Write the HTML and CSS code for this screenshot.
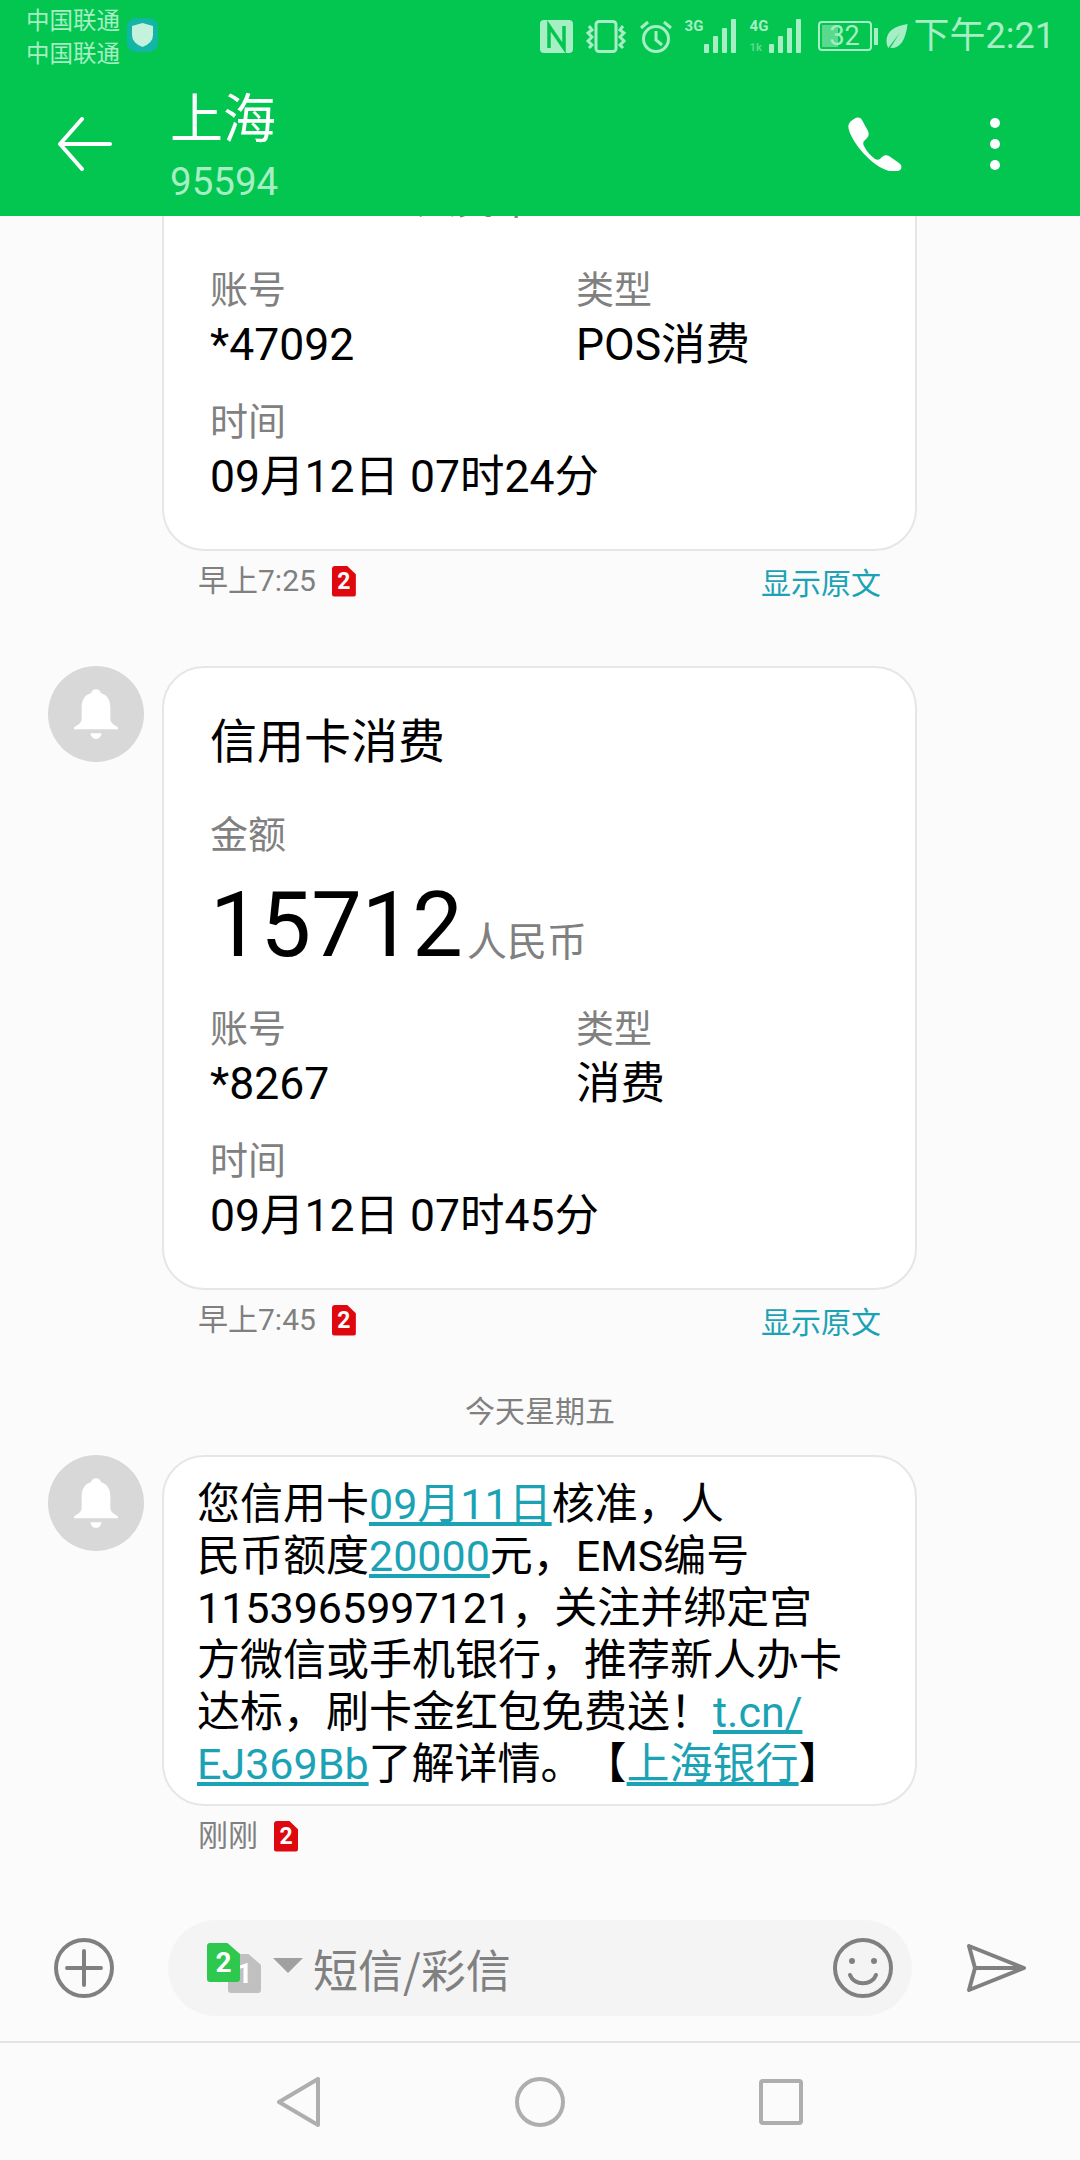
FILE: index.html
```html
<!DOCTYPE html>
<html lang="zh">
<head>
  <meta charset="UTF-8">
  <meta name="viewport" content="width=device-width, initial-scale=1">
  <title>95594</title>
  <link rel="stylesheet" href="styles.css">
</head>
<body>
  <div class="phone">
    <!-- Top green area -->
    <header class="topbar">
      <div class="status">
        <div class="carriers">
          <span>中国联通</span>
          <span>中国联通</span>
        </div>
        <svg class="shield" width="31" height="34" viewBox="0 0 31 34">
          <rect x="0" y="0" width="31" height="34" rx="9" fill="#13b5a5"/>
          <path d="M15.500 5 l10.500 3 v9 q0 8 -10.500 12 q-10.500 -4 -10.500 -12 v-9z" fill="#c4f2dc"/>
        </svg>
        <div class="status-right">
          <svg width="33" height="33" viewBox="0 0 33 33"><rect width="33" height="33" rx="4" fill="#a6eec4"/><path d="M9 28V6l15 22V6" fill="none" stroke="#03c651" stroke-width="3.500"/></svg>
          <svg width="42" height="33" viewBox="0 0 42 33" fill="none" stroke="#a6eec4" stroke-width="3"><rect x="11" y="1.500" width="20" height="30" rx="3"/><path d="M4 6l3 4-4 3 4 4-4 4 4 4-3 3M38 6l-3 4 4 3-4 4 4 4-4 4 3 3"/></svg>
          <svg width="34" height="33" viewBox="0 0 34 33" fill="none" stroke="#a6eec4" stroke-width="3"><circle cx="17" cy="19" r="12.500"/><path d="M17 11v9l6 5M2 8l7-6M32 8l-7-6"/></svg>
          <div class="signal">
            <div class="net"><span>3G</span></div>
            <svg width="34" height="34" viewBox="0 0 34 34" fill="#a6eec4"><rect x="0" y="25" width="5" height="9" rx="1"/><rect x="9" y="17" width="5" height="17" rx="1"/><rect x="18" y="9" width="5" height="25" rx="1"/><rect x="27" y="0" width="5" height="34" rx="1"/></svg>
          </div>
          <div class="signal">
            <div class="net"><span>4G</span><span class="net-sub">1k</span></div>
            <svg width="34" height="34" viewBox="0 0 34 34" fill="#a6eec4"><rect x="0" y="25" width="5" height="9" rx="1"/><rect x="9" y="17" width="5" height="17" rx="1"/><rect x="18" y="9" width="5" height="25" rx="1"/><rect x="27" y="0" width="5" height="34" rx="1"/></svg>
          </div>
          <div class="battery"><span class="battery-fill"></span><span class="battery-num">32</span></div>
          <span class="battery-tip"></span>
          <svg class="leaf" width="22" height="25" viewBox="0 0 22 26"><path d="M22 0C8 2 0 8 0 18q0 4 2 7L14 9 4 25c10 1 16-8 18-25z" fill="#a6eec4"/></svg>
          <span class="clock">下午2:21</span>
        </div>
      </div>
      <div class="appbar">
        <svg width="54" height="54" viewBox="0 0 54 54" fill="none" stroke="#fff" stroke-width="4" stroke-linecap="round" stroke-linejoin="round"><path d="M52 27H2M24 2L2 27l22 25"/></svg>
        <div class="contact">
          <div class="contact-name">上海</div>
          <div class="contact-num">95594</div>
        </div>
        <svg class="phone-icon" width="54" height="54" viewBox="0 0 54 54"><path d="M6 2c3-2 6-2 8 1l6 11c1 3 1 5-1 7l-3 3c-1 1-1 3 0 5 3 6 7 10 11 13 2 1 3 1 5 0l2-2c2-2 5-2 7-1l10 7c3 2 3 5 1 7-3 2-7 2-11 1C23 49 4 25 1 13-1 8 2 4 6 2z" fill="#fff"/></svg>
        <div class="dots"><i></i><i></i><i></i></div>
      </div>
    </header>

    <!-- Messages -->
    <main class="messages">
      <div class="msg first">
        <div class="avatar-space"></div>
        <div class="msg-body">
          <div class="bubble card">
            <div class="amount first-amount"><span class="amount-num">3176</span><span class="amount-unit">人民币</span></div>
            <div class="fields">
              <div class="field"><div class="label">账号</div><div class="value">*47092</div></div>
              <div class="field"><div class="label">类型</div><div class="value">POS消费</div></div>
            </div>
            <div class="field time"><div class="label">时间</div><div class="value">09月12日 07时24分</div></div>
          </div>
          <div class="meta">
            <span class="stamp">早上7:25</span>
            <span class="sim">2</span>
            <span class="raw">显示原文</span>
          </div>
        </div>
      </div>

      <div class="msg">
        <div class="avatar">
          <svg width="44" height="52" viewBox="0 0 46 52" fill="#fff"><path d="M23 0c3 0 5 2 5 4 7 2 10 8 10 15v12c0 4 3 6 8 9v2H0v-2c5-3 8-5 8-9V19C8 12 11 6 18 4c0-2 2-4 5-4z"/><path d="M17 46h12c-1 4-3 6-6 6s-5-2-6-6z"/></svg>
        </div>
        <div class="msg-body">
          <div class="bubble card">
            <div class="card-title">信用卡消费</div>
            <div class="label amount-label">金额</div>
            <div class="amount"><span class="amount-num">15712</span><span class="amount-unit">人民币</span></div>
            <div class="fields">
              <div class="field"><div class="label">账号</div><div class="value">*8267</div></div>
              <div class="field"><div class="label">类型</div><div class="value">消费</div></div>
            </div>
            <div class="field time"><div class="label">时间</div><div class="value">09月12日 07时45分</div></div>
          </div>
          <div class="meta">
            <span class="stamp">早上7:45</span>
            <span class="sim">2</span>
            <span class="raw">显示原文</span>
          </div>
        </div>
      </div>

      <div class="date-sep">今天星期五</div>

      <div class="msg">
        <div class="avatar">
          <svg width="44" height="52" viewBox="0 0 46 52" fill="#fff"><path d="M23 0c3 0 5 2 5 4 7 2 10 8 10 15v12c0 4 3 6 8 9v2H0v-2c5-3 8-5 8-9V19C8 12 11 6 18 4c0-2 2-4 5-4z"/><path d="M17 46h12c-1 4-3 6-6 6s-5-2-6-6z"/></svg>
        </div>
        <div class="msg-body">
          <div class="bubble text">
            <div>您信用卡<a>09月11日</a>核准，人</div>
            <div>民币额度<a>20000</a>元，EMS编号</div>
            <div>1153965997121，关注并绑定宫</div>
            <div>方微信或手机银行，推荐新人办卡</div>
            <div>达标，刷卡金红包免费送！<a>t.cn/</a></div>
            <div><a>EJ369Bb</a>了解详情。【<a>上海银行</a>】</div>
          </div>
          <div class="meta">
            <span class="stamp">刚刚</span>
            <span class="sim">2</span>
          </div>
        </div>
      </div>
    </main>

    <!-- Input row -->
    <div class="composer">
      <svg width="60" height="60" viewBox="0 0 60 60" fill="none" stroke="#808080" stroke-width="4" stroke-linecap="round"><circle cx="30" cy="30" r="28"/><path d="M30 13v34M13 30h34"/></svg>
      <div class="input">
        <div class="sim-pick">
          <span class="sim-one">1</span>
          <span class="sim-two">2</span>
        </div>
        <span class="caret"></span>
        <span class="placeholder">短信/彩信</span>
        <svg class="smile" width="60" height="60" viewBox="0 0 60 60" fill="none" stroke="#808080" stroke-width="4" stroke-linecap="round"><circle cx="30" cy="30" r="28"/><circle cx="19" cy="23" r="3" fill="#808080" stroke="none"/><circle cx="41" cy="23" r="3" fill="#808080" stroke="none"/><path d="M17 37c4 11 22 11 26 0"/></svg>
      </div>
      <svg width="60" height="48" viewBox="0 0 60 48" fill="none" stroke="#808080" stroke-width="4" stroke-linejoin="round"><path d="M3 2l55 22L3 46l6-22zM9 24h49"/></svg>
    </div>

    <!-- Navigation bar -->
    <nav class="navbar">
      <svg width="44" height="50" viewBox="0 0 44 50" fill="none" stroke="#aeaeae" stroke-width="4" stroke-linejoin="round"><path d="M41 2v46L2 25z"/></svg>
      <svg width="50" height="50" viewBox="0 0 50 50" fill="none" stroke="#aeaeae" stroke-width="4"><circle cx="25" cy="25" r="23"/></svg>
      <svg width="44" height="46" viewBox="0 0 44 46" fill="none" stroke="#aeaeae" stroke-width="4"><rect x="2" y="2" width="40" height="42" rx="2"/></svg>
    </nav>
  </div>
</body>
</html>
```

FILE: styles.css
```css
/* General */
body {
  margin: 0;
  background: #fbfbfb;
  font-family: "Noto Sans CJK SC", "Roboto", sans-serif;
}
.phone {
  width: 1080px;
  height: 2160px;
  display: flex;
  flex-direction: column;
  overflow: hidden;
}
/* Top green area */
.topbar {
  height: 216px;
  flex-shrink: 0;
  background: #03c651;
}
.status {
  height: 72px;
  display: flex;
  align-items: center;
  padding: 0 25px 0 26px;
  box-sizing: border-box;
}
.carriers {
  display: flex;
  flex-direction: column;
  font-size: 23.500px;
  line-height: 33px;
  color: #a6eec4;
}
.shield {
  margin-left: 7px;
  margin-bottom: 2px;
}
.status-right {
  margin-left: auto;
  display: flex;
  align-items: center;
  gap: 12px;
}
.signal {
  display: flex;
  height: 34px;
}
.net {
  width: 19px;
  display: flex;
  flex-direction: column;
  justify-content: space-between;
  font: bold 15px/15px "Roboto", sans-serif;
  color: #a6eec4;
}
.net-sub {
  font-size: 11px;
  line-height: 11px;
  color: #5ad98c;
}
.battery {
  width: 54px;
  height: 30px;
  box-sizing: border-box;
  border: 2px solid #a6eec4;
  border-radius: 4px;
  position: relative;
  margin-left: 3px;
  font: 27px/26px "Roboto", sans-serif;
  color: #a6eec4;
  text-align: center;
}
.battery-fill {
  position: absolute;
  left: 2px;
  top: 2px;
  bottom: 2px;
  width: 16px;
  background: #5ad98c;
}
.battery-num {
  position: relative;
}
.battery-tip {
  width: 4px;
  height: 17px;
  background: #a6eec4;
  margin-left: -10px;
}
.leaf {
  margin-left: -4px;
}
.clock {
  font: 36px/40px "Roboto", "Noto Sans CJK SC", sans-serif;
  color: #a6eec4;
  margin-left: -6px;
}
.appbar {
  height: 144px;
  display: flex;
  align-items: center;
  padding: 0 80px 0 58px;
}
.contact {
  margin-left: 58px;
  margin-top: 0;
}
.contact-name {
  font-size: 53px;
  line-height: 62px;
  color: #fff;
}
.contact-num {
  font: 38.500px/44px "Roboto", sans-serif;
  color: #a6eec4;
  margin-top: 14px;
}
.phone-icon {
  margin-left: auto;
}
.dots {
  display: flex;
  flex-direction: column;
  gap: 11px;
  margin-left: 88px;
}
.dots i {
  width: 10px;
  height: 10px;
  border-radius: 50%;
  background: #fff;
}
/* Messages */
.messages {
  flex: 1;
  min-height: 0;
  overflow: hidden;
  padding-left: 48px;
}
.msg {
  display: flex;
  gap: 18px;
}
.msg.first {
  margin-top: -126px;
  margin-bottom: 55px;
}
.avatar-space {
  width: 96px;
  flex-shrink: 0;
}
.avatar {
  width: 96px;
  height: 96px;
  flex-shrink: 0;
  border-radius: 50%;
  background: #d8d8d8;
  display: flex;
  align-items: center;
  justify-content: center;
}
.msg-body {
  width: 755px;
}
.bubble {
  background: #fff;
  border: 2px solid #e6e6e6;
  border-radius: 42px;
  box-sizing: border-box;
}
.card {
  padding: 39px 46px 46px;
}
.card-title {
  font-size: 47px;
  line-height: 62px;
  color: #000;
}
.label {
  font-size: 38px;
  line-height: 48px;
  color: #808080;
}
.value {
  font: 44.500px/52px "Roboto", "Noto Sans CJK SC", sans-serif;
  color: #000;
  margin-top: 8px;
}
.amount-label {
  margin-top: 39px;
}
.amount {
  display: flex;
  align-items: baseline;
  margin-top: 20px;
  height: 100px;
}
.first-amount {
  margin-top: 3px;
  height: 103px;
}
.amount-num {
  font: 90px/100px "Roboto", sans-serif;
  color: #000;
}
.amount-unit {
  font-size: 40px;
  color: #808080;
  margin-left: 4px;
}
.fields {
  display: flex;
  margin-top: 26px;
}
.fields .field:first-child {
  width: 366px;
}
.time {
  margin-top: 24px;
}
.meta {
  display: flex;
  align-items: center;
  height: 60px;
  padding: 0 36px 0 36px;
}
.stamp {
  font: 30px/40px "Roboto", "Noto Sans CJK SC", sans-serif;
  color: #808080;
}
.sim {
  width: 24px;
  height: 31px;
  margin-left: 16px;
  background: #e0080f;
  border-radius: 3px;
  clip-path: polygon(0 0, 62% 0, 100% 28%, 100% 100%, 0 100%);
  color: #fff;
  font: bold 23px/31px "Roboto", sans-serif;
  text-align: center;
}
.raw {
  margin-left: auto;
  font-size: 30px;
  line-height: 40px;
  color: #1ba3b5;
}
.date-sep {
  text-align: center;
  font-size: 30px;
  line-height: 40px;
  color: #808080;
  margin: 39px 0 26px -48px;
}
.text {
  padding: 21px 33px 14px;
  font: 43px/52px "Roboto", "Noto Sans CJK SC", sans-serif;
  color: #000;
  white-space: nowrap;
  text-spacing-trim: space-all;
}
.text a {
  color: #1ba3b5;
  text-decoration: underline;
}
/* Input row */
.composer {
  height: 140px;
  flex-shrink: 0;
  display: flex;
  align-items: center;
  padding: 0 0 6px 54px;
  box-sizing: border-box;
}
.input {
  width: 744px;
  height: 96px;
  margin: 0 54px;
  background: #f4f4f4;
  border-radius: 48px;
  display: flex;
  align-items: center;
  padding: 0 19px 0 39px;
  box-sizing: border-box;
  flex-shrink: 0;
}
.sim-pick {
  position: relative;
  width: 54px;
  height: 50px;
}
.sim-two,
.sim-one {
  position: absolute;
  width: 33px;
  height: 39px;
  border-radius: 3px;
  clip-path: polygon(0 0, 62% 0, 100% 28%, 100% 100%, 0 100%);
  color: #fff;
  font: bold 28px/39px "Roboto", sans-serif;
  text-align: center;
}
.sim-two {
  left: 0;
  top: 0;
  background: #2dc84d;
}
.sim-one {
  left: 21px;
  top: 11px;
  background: #c0c0c0;
}
.caret {
  border: 15px solid transparent;
  border-top: 15px solid #a0a0a0;
  border-bottom: 0;
  margin-left: 12px;
  margin-bottom: 6px;
}
.placeholder {
  font-size: 45px;
  color: #808080;
  margin-left: 10px;
}
.smile {
  margin-left: auto;
}
/* Navigation bar */
.navbar {
  height: 119px;
  flex-shrink: 0;
  box-sizing: border-box;
  border-top: 2px solid #e4e4e4;
  display: flex;
  align-items: center;
  justify-content: center;
  gap: 194px;
}
```
